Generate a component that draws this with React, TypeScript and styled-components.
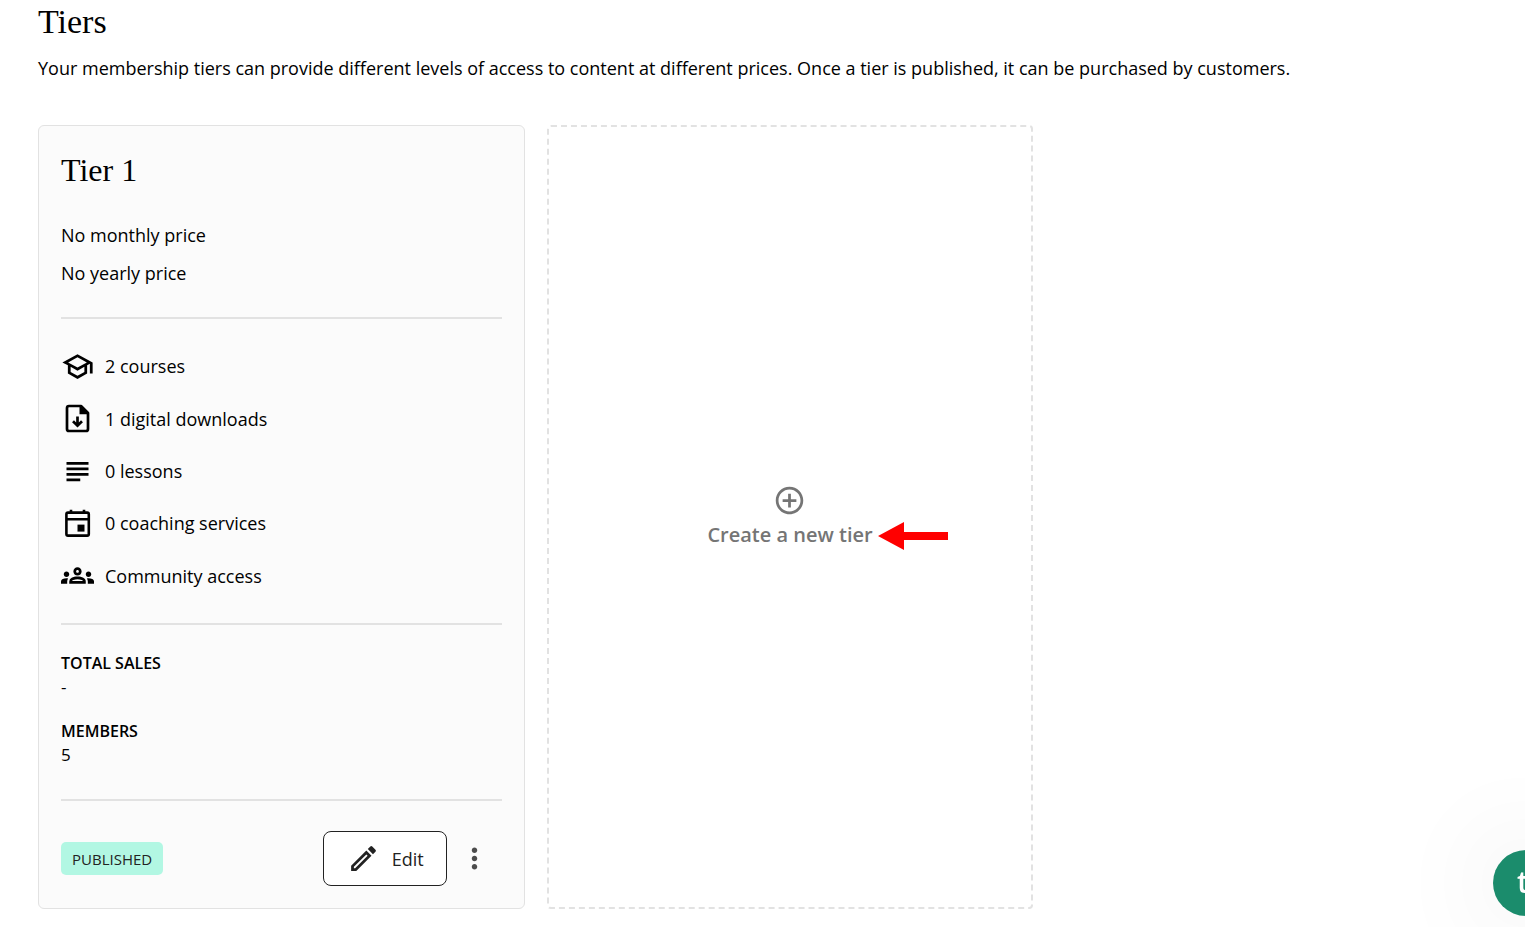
import React from "react";
import styled, { createGlobalStyle } from "styled-components";
import {
  MdOutlineSchool,
  MdSubject,
  MdOutlineGroups,
  MdOutlineModeEdit,
  MdMoreVert,
  MdAddCircleOutline,
} from "react-icons/md";

const GlobalStyle = createGlobalStyle`
  *, *::before, *::after { box-sizing: border-box; }
  body {
    margin: 0;
    background: #fff;
    color: #000;
    font-family: "Open Sans", "Noto Sans", sans-serif;
    font-size: 18px;
    line-height: 28px;
  }
  h1, h2, p, ul, dl, dd { margin: 0; padding: 0; }
`;

const Page = styled.main`
  padding: 2px 0 18px 38px;
  overflow: hidden;
`;

const Heading = styled.h1`
  font-family: "Liberation Serif", serif;
  font-weight: 400;
  font-size: 34px;
  line-height: 40px;
`;

const Intro = styled.p`
  margin-top: 12px;
`;

const TierGrid = styled.section`
  display: grid;
  grid-template-columns: repeat(3, minmax(0, 1fr));
  gap: 22px;
  margin: 43px -17px 0 0;
`;

const Card = styled.article`
  display: flex;
  flex-direction: column;
  padding: 24px 22px 22px;
  border: 1px solid #e2e2e2;
  border-radius: 6px;
  background: #fbfbfb;
`;

const CardTitle = styled.h2`
  font-family: "Liberation Serif", serif;
  font-weight: 400;
  font-size: 32px;
  line-height: 40px;
`;

const Prices = styled.div`
  padding: 26px 0 4px;
  line-height: 38px;
`;

const Divider = styled.hr`
  width: 100%;
  margin: 21px 0;
  border: 0;
  border-top: 2px solid #e2e2e2;
`;

const Features = styled.ul`
  display: flex;
  flex-direction: column;
  min-height: 262px;
  list-style: none;
`;

const Feature = styled.li`
  display: flex;
  flex: 1;
  align-items: center;
  gap: 11px;

  svg {
    width: 33px;
    height: 33px;
    flex: none;
  }
`;

const Stats = styled.dl`
  display: grid;
  gap: 22px;
  padding: 6px 0 12px;
  line-height: 23px;
`;

const StatLabel = styled.dt`
  font-size: 16px;
  font-weight: 600;
`;

const StatValue = styled.dd`
  font-size: 17px;
`;

const Footer = styled.footer`
  display: flex;
  align-items: center;
  padding-top: 9px;
`;

const Badge = styled.span`
  margin-right: auto;
  padding: 2px 11px 0;
  border-radius: 5px;
  background: #b2f7e3;
  color: #222;
  font-size: 15px;
  font-weight: 500;
  line-height: 31px;
`;

const EditButton = styled.button`
  display: flex;
  align-items: center;
  gap: 12px;
  height: 55px;
  padding: 0 22px 0 23px;
  border: 1px solid #222;
  border-radius: 8px;
  background: #fff;
  color: #222;
  font: inherit;
`;

const MenuButton = styled.button`
  display: flex;
  align-items: center;
  justify-content: center;
  width: 55px;
  height: 55px;
  padding: 0;
  border: 0;
  background: none;
  color: #4c4c4c;
`;

const CreateTier = styled.button`
  display: flex;
  flex-direction: column;
  align-items: center;
  justify-content: center;
  gap: 3px;
  padding: 0;
  border: 2px dashed #e2e2e2;
  border-radius: 4px;
  background: #fff;
  color: #757575;
  font: inherit;
  font-size: 20px;
  font-weight: 600;
`;

const CreateLabel = styled.span`
  position: relative;
  line-height: 30px;
`;

const Arrow = styled.svg`
  position: absolute;
  left: 100%;
  top: 2px;
  width: 76px;
  height: 28px;
`;

const ChatButton = styled.button`
  position: fixed;
  right: -34px;
  bottom: 11px;
  width: 66px;
  height: 66px;
  padding: 0 0 3px 24px;
  border: 0;
  border-radius: 50%;
  background: #1b8c6c;
  color: #fff;
  box-shadow: 0 0 110px rgba(0, 0, 0, 0.12);
  font-family: "Open Sans", sans-serif;
  font-size: 30px;
  font-weight: 600;
  text-align: left;
`;

const DownloadFileIcon = () => (
  <svg viewBox="0 0 33 33" aria-hidden="true">
    <path
      d="M8 4h12l7 7v16a2 2 0 0 1-2 2H8a2 2 0 0 1-2-2V6a2 2 0 0 1 2-2Z"
      fill="none"
      stroke="currentColor"
      strokeWidth="2.7"
      strokeLinejoin="round"
    />
    <path d="M18.5 3.5H20l7.5 7.5v1.2h-9Z" fill="currentColor" />
    <path
      d="M16.5 14.5v9M12 19.2l4.5 4.5 4.5-4.5"
      fill="none"
      stroke="currentColor"
      strokeWidth="2.7"
    />
  </svg>
);

const CalendarIcon = () => (
  <svg viewBox="0 0 33 33" aria-hidden="true">
    <rect
      x="5.4"
      y="5.6"
      width="22.4"
      height="23"
      rx="1.6"
      fill="none"
      stroke="currentColor"
      strokeWidth="2.6"
    />
    <path
      d="M5 12.3h23M10 2.7v3M23 2.7v3"
      stroke="currentColor"
      strokeWidth="2.6"
    />
    <path d="M16.5 17.6h7v7h-7Z" fill="currentColor" />
  </svg>
);

const features = [
  { icon: <MdOutlineSchool />, label: "2 courses" },
  { icon: <DownloadFileIcon />, label: "1 digital downloads" },
  { icon: <MdSubject />, label: "0 lessons" },
  { icon: <CalendarIcon />, label: "0 coaching services" },
  { icon: <MdOutlineGroups />, label: "Community access" },
];

const stats = [
  { label: "TOTAL SALES", value: "-" },
  { label: "MEMBERS", value: "5" },
];

export default function App() {
  return (
    <>
      <GlobalStyle />
      <Page>
        <Heading>Tiers</Heading>
        <Intro>
          Your membership tiers can provide different levels of access to
          content at different prices. Once a tier is published, it can be
          purchased by customers.
        </Intro>
        <TierGrid>
          <Card>
            <CardTitle>Tier 1</CardTitle>
            <Prices>
              <p>No monthly price</p>
              <p>No yearly price</p>
            </Prices>
            <Divider />
            <Features>
              {features.map((feature) => (
                <Feature key={feature.label}>
                  {feature.icon}
                  {feature.label}
                </Feature>
              ))}
            </Features>
            <Divider />
            <Stats>
              {stats.map((stat) => (
                <div key={stat.label}>
                  <StatLabel>{stat.label}</StatLabel>
                  <StatValue>{stat.value}</StatValue>
                </div>
              ))}
            </Stats>
            <Divider />
            <Footer>
              <Badge>PUBLISHED</Badge>
              <EditButton type="button">
                <MdOutlineModeEdit size={33} />
                Edit
              </EditButton>
              <MenuButton type="button" aria-label="More options">
                <MdMoreVert size={33} />
              </MenuButton>
            </Footer>
          </Card>
          <CreateTier type="button">
            <MdAddCircleOutline size={33} />
            <CreateLabel>
              Create a new tier
              <Arrow viewBox="0 0 76 28" aria-hidden="true">
                <path d="M5 14 31 0v10h44v8H31v10Z" fill="#f00" />
              </Arrow>
            </CreateLabel>
          </CreateTier>
        </TierGrid>
      </Page>
      <ChatButton type="button">t</ChatButton>
    </>
  );
}
